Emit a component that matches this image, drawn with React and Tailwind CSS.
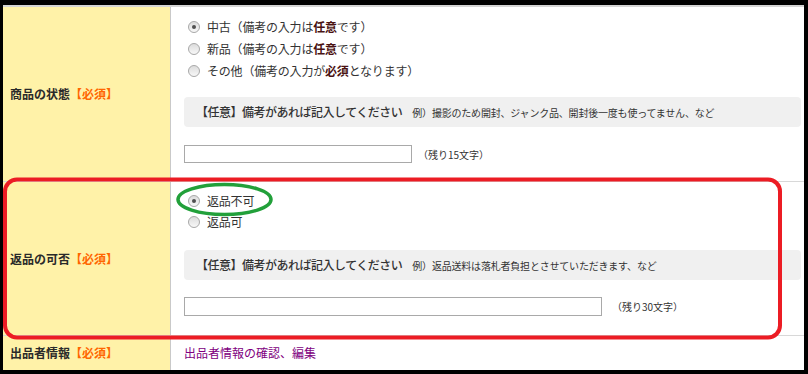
import React from "react";

function Radio({ checked }) {
  return (
    <span className="ml-[4px] mr-[7px] w-[12px] h-[12px] rounded-full border border-[#a8a8a8] bg-gradient-to-b from-[#dcdcdc] to-[#f8f8f8] flex items-center justify-center shrink-0">
      {checked && <span className="w-[4px] h-[4px] rounded-full bg-[#505050]" />}
    </span>
  );
}

function Line({ checked, children }) {
  return (
    <div className="h-[22px] flex items-center text-[12px] text-[#333] tracking-[-0.2px]">
      <Radio checked={checked} />
      <span>{children}</span>
    </div>
  );
}

function Label({ children }) {
  return (
    <div className="w-[168px] shrink-0 bg-[#fff2a8] border-r border-[#c9c9c9] flex items-center pl-[7px] text-[12px] font-bold text-[#2a2a2a]">
      <span>{children}</span>
      <span className="text-[#ff6600]">【必須】</span>
    </div>
  );
}

function Note({ example }) {
  return (
    <div className="h-[30px] rounded-[4px] bg-[#f0f0f0] flex items-center pl-[12px] text-[#333]">
      <span className="text-[12px] font-medium tracking-[-0.5px]">【任意】備考があれば記入してください</span>
      <span className="ml-[10px] text-[10px] tracking-[-0.2px]">{example}</span>
    </div>
  );
}

export default function App() {
  return (
    <div
      className="relative w-[808px] h-[374px] bg-black pt-[5px] pl-[3px] pr-[4px] pb-[4px]"
      style={{ fontFamily: '"Noto Sans CJK JP", "Noto Sans", sans-serif' }}
    >
      <div className="bg-white border-t-2 border-[#d4d4d4] h-full flex flex-col overflow-hidden">
        <div className="flex h-[175px] border-b border-[#d8d8d8]">
          <Label>商品の状態</Label>
          <div className="flex-1 pl-[13px] pr-[3px] pt-[9px]">
            <Line checked>
              中古（備考の入力は<b className="text-[#4a1212]">任意</b>です）
            </Line>
            <Line>
              新品（備考の入力は<b className="text-[#4a1212]">任意</b>です）
            </Line>
            <Line>
              その他（備考の入力が<b className="text-[#4a1212]">必須</b>となります）
            </Line>
            <div className="mt-[15px]">
              <Note example="例）撮影のため開封、ジャンク品、開封後一度も使ってません、など" />
            </div>
            <div className="mt-[18px] flex items-center">
              <div className="w-[228px] h-[18px] border border-[#a9a9a9] bg-white" />
              <span className="ml-[6px] text-[10px] text-[#333]">（残り15文字）</span>
            </div>
          </div>
        </div>
        <div className="flex h-[154px] border-b border-[#d8d8d8]">
          <Label>返品の可否</Label>
          <div className="flex-1 pl-[13px] pr-[3px] pt-[8px]">
            <Line checked>返品不可</Line>
            <div className="-mt-[1px]">
              <Line>返品可</Line>
            </div>
            <div className="mt-[17px]">
              <Note example="例）返品送料は落札者負担とさせていただきます、など" />
            </div>
            <div className="mt-[17px] flex items-center">
              <div className="w-[418px] h-[19px] border border-[#a9a9a9] bg-white" />
              <span className="ml-[10px] text-[10px] text-[#333]">（残り30文字）</span>
            </div>
          </div>
        </div>
        <div className="flex flex-1">
          <Label>出品者情報</Label>
          <div className="flex-1 pl-[13px] flex items-center text-[12px] text-[#800080]">
            出品者情報の確認、編集
          </div>
        </div>
      </div>
      <svg className="absolute left-0 top-0 pointer-events-none" width="808" height="374">
        <rect x="5" y="179.5" width="775" height="158" rx="12" fill="none" stroke="#ec1c24" strokeWidth="4" />
        <ellipse cx="224.5" cy="199.5" rx="46.5" ry="15" fill="none" stroke="#22a03a" strokeWidth="3.5" />
      </svg>
    </div>
  );
}
